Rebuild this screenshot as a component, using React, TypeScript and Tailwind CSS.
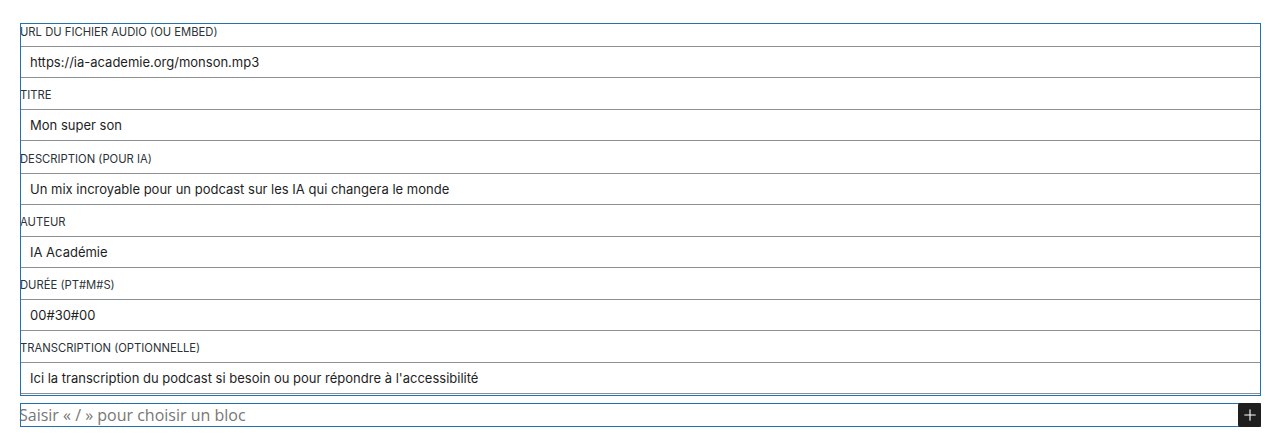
import { Plus } from "lucide-react";

const fields = [
  { label: "URL du fichier audio (ou embed)", value: "https://ia-academie.org/monson.mp3" },
  { label: "Titre", value: "Mon super son" },
  { label: "Description (pour IA)", value: "Un mix incroyable pour un podcast sur les IA qui changera le monde" },
  { label: "Auteur", value: "IA Académie" },
  { label: "Durée (PT#M#S)", value: "00#30#00" },
  { label: "Transcription (optionnelle)", value: "Ici la transcription du podcast si besoin ou pour répondre à l'accessibilité" },
];

function Field({ label, value }: { label: string; value: string }) {
  return (
    <div className="flex flex-col">
      <label className="mb-[6px] h-4 text-[11.25px] leading-4 uppercase text-[#2c3338]">{label}</label>
      <input
        readOnly
        value={value}
        className="h-8 w-full border border-[#8c8f94] bg-white px-[9px] text-[13px] text-[#1e1e1e] outline-none"
      />
    </div>
  );
}

export default function App() {
  return (
    <div className="min-h-screen bg-white pt-[23px] pr-[18px] pl-5 font-['Inter',sans-serif]">
      {/* bloc sélectionné */}
      <div className="relative flex flex-col gap-[9.3px] pt-px pb-[2px]">
        {fields.map((f) => (
          <Field key={f.label} label={f.label} value={f.value} />
        ))}
        <div className="pointer-events-none absolute inset-0 border border-[#2271b1]" />
      </div>

      {/* inserteur */}
      <div className="relative mt-[7px] flex h-[24px] items-center border border-[#2271b1]">
        <span className="-ml-[2px] font-['Open_Sans',sans-serif] text-[16px] text-[#777777]">
          Saisir « / » pour choisir un bloc
        </span>
        <button
          type="button"
          className="absolute -top-px -right-px flex h-[24px] w-[23px] items-center justify-center rounded-[2px] bg-[#1e1e1e] text-white"
        >
          <Plus size={18} strokeWidth={1.5} />
        </button>
      </div>
    </div>
  );
}
